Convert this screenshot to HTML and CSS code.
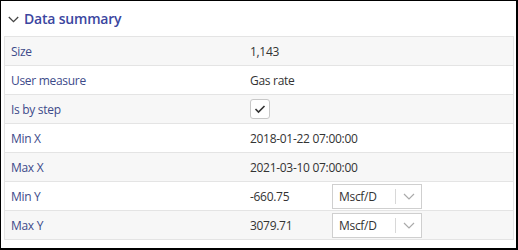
FILE: index.html
```html
<!DOCTYPE html>
<html>
<head>
<meta charset="utf-8">
<link rel="stylesheet" href="styles.css">
</head>
<body>
<div class="frame">
  <div class="header">
    <svg class="chev" width="11" height="7" viewBox="0 0 11 7"><path d="M0.8 1 L5.5 5.7 L10.2 1" fill="none" stroke="#444" stroke-width="1.3"/></svg>
    <span class="title">Data summary</span>
  </div>
  <div class="table">
    <div class="row alt"><div class="label">Size</div><div class="value">1,143</div></div>
    <div class="row"><div class="label">User measure</div><div class="value">Gas rate</div></div>
    <div class="row alt"><div class="label">Is by step</div><div class="value"><span class="check"><svg width="12" height="10" viewBox="0 0 12 10"><path d="M1.5 5 L4.5 8 L10.5 2" fill="none" stroke="#333" stroke-width="1.6"/></svg></span></div></div>
    <div class="row"><div class="label">Min X</div><div class="value">2018-01-22 07:00:00</div></div>
    <div class="row alt"><div class="label">Max X</div><div class="value">2021-03-10 07:00:00</div></div>
    <div class="row"><div class="label">Min Y</div><div class="value"><span class="num">-660.75</span><span class="select"><span class="sel-text">Mscf/D</span><span class="sel-btn"><svg width="12" height="7" viewBox="0 0 12 7"><path d="M1 1 L6 6 L11 1" fill="none" stroke="#aaa" stroke-width="1.2"/></svg></span></span></div></div>
    <div class="row alt"><div class="label">Max Y</div><div class="value"><span class="num">3079.71</span><span class="select"><span class="sel-text">Mscf/D</span><span class="sel-btn"><svg width="12" height="7" viewBox="0 0 12 7"><path d="M1 1 L6 6 L11 1" fill="none" stroke="#aaa" stroke-width="1.2"/></svg></span></span></div></div>
  </div>
</div>
</body>
</html>
```
FILE: styles.css
```css
html, body {
  margin: 0;
  padding: 0;
  background: #fff;
}
.frame {
  width: 518px;
  height: 250px;
  box-sizing: border-box;
  border-style: solid;
  border-color: #000;
  border-width: 1px 2px 2px 1px;
  font-family: "Open Sans", "Noto Sans", sans-serif;
  background: #fff;
}
.header {
  height: 35px;
  display: flex;
  align-items: center;
  padding-left: 7px;
  gap: 5px;
}
.chev {
  display: block;
  margin-top: 1px;
}
.title {
  font-size: 14px;
  font-weight: 600;
  color: #3b46a0;
  letter-spacing: -0.2px;
}
.table {
  margin: 0 2px 0 3px;
  border: 1px solid #e4e4e4;
  border-bottom: none;
}
.row {
  display: grid;
  grid-template-columns: 245px 1fr;
  height: 28px;
  border-bottom: 1px solid #e4e4e4;
  align-items: center;
  font-size: 12px;
  letter-spacing: -0.3px;
}
.row.alt {
  background: #f7f7f7;
}
.label {
  padding-left: 6px;
  color: #3d4a8a;
}
.value {
  color: #333;
  display: flex;
  align-items: center;
}
.check {
  width: 18px;
  height: 18px;
  border: 1px solid #c8c8c8;
  border-radius: 3px;
  background: #fff;
  display: flex;
  align-items: center;
  justify-content: center;
}
.num {
  width: 82px;
}
.select {
  width: 88px;
  height: 23px;
  border: 1px solid #cfcfcf;
  background: #fff;
  display: flex;
  align-items: center;
}
.sel-text {
  flex: 1;
  padding-left: 6px;
  color: #333;
}
.sel-btn {
  width: 25px;
  height: 15px;
  border-left: 1px solid #d8d8d8;
  display: flex;
  align-items: center;
  justify-content: center;
}
```
